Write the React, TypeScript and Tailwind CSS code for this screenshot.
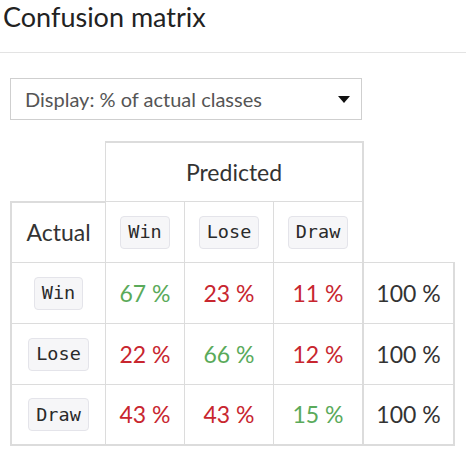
const classes = ["Win", "Lose", "Draw"];

const rows = [
  { label: "Win", values: [67, 23, 11] },
  { label: "Lose", values: [22, 66, 12] },
  { label: "Draw", values: [43, 43, 15] }
];

const sans = "font-['Lato','Liberation_Sans',sans-serif]";
const mono = "font-['DejaVu_Sans_Mono','Liberation_Mono',monospace]";

function Badge({ children }: { children: string }) {
  return (
    <span
      className={`inline-flex h-[33px] items-center rounded-[4px] border border-[#e4e4ea] bg-[#f6f6f8] px-[7px] text-[18.5px] text-[#2a2a2a] ${mono}`}
    >
      {children}
    </span>
  );
}

export default function App() {
  return (
    <div className={`h-[456px] w-[466px] bg-white text-[#333] ${sans}`}>
      <header className="flex h-[53px] items-start border-b border-[#e3e3e3] pl-[3px]">
        <h1 className="mt-[-1px] text-[27px] leading-[36px] text-[#222]">Confusion matrix</h1>
      </header>

      <div className="px-[10px] pt-[25px]">
        <div className="flex h-[42px] w-[352px] items-center justify-between border border-[#cfcfcf] pl-[14px] pr-[10px]">
          <span className="text-[20px] text-[#555]">Display: % of actual classes</span>
          <svg width="12" height="7" viewBox="0 0 12 7" className="mr-[1px]">
            <path d="M0 0 L12 0 L6 7 Z" fill="#111" />
          </svg>
        </div>

        <div className="mt-[21px] grid grid-cols-[95px_79px_89px_89px_93px] grid-rows-[60px_61px_61px_61px_62px] text-[23px]">
          <div />
          <div className="col-span-3 flex items-center justify-center border-l border-t-2 border-[#dcdcdc]">
            Predicted
          </div>
          <div className="border-l-2 border-[#dcdcdc]" />

          <div className="flex items-center justify-center border-l-2 border-t-2 border-[#dcdcdc]">
            Actual
          </div>
          {classes.map((c) => (
            <div
              key={c}
              className="flex items-center justify-center border-l border-t border-[#dcdcdc]"
            >
              <Badge>{c}</Badge>
            </div>
          ))}
          <div className="border-l-2 border-[#dcdcdc]" />

          {rows.map((row, r) => {
            const last = r === rows.length - 1;
            return [
              <div
                key={row.label}
                className={`flex items-center justify-center border-l-2 border-t border-[#dcdcdc] ${last ? "border-b-2" : ""}`}
              >
                <Badge>{row.label}</Badge>
              </div>,
              ...row.values.map((v, i) => (
                <div
                  key={row.label + i}
                  className={`flex items-center justify-center border-l border-t border-[#dcdcdc] ${last ? "border-b-2" : ""} ${i === r ? "text-[#5aaa5a]" : "text-[#c8262f]"}`}
                >
                  {v} %
                </div>
              )),
              <div
                key={row.label + "total"}
                className={`flex items-center justify-center border-l-2 border-r-2 border-t border-[#dcdcdc] ${last ? "border-b-2" : ""}`}
              >
                100 %
              </div>
            ];
          })}
        </div>
      </div>
    </div>
  );
}
